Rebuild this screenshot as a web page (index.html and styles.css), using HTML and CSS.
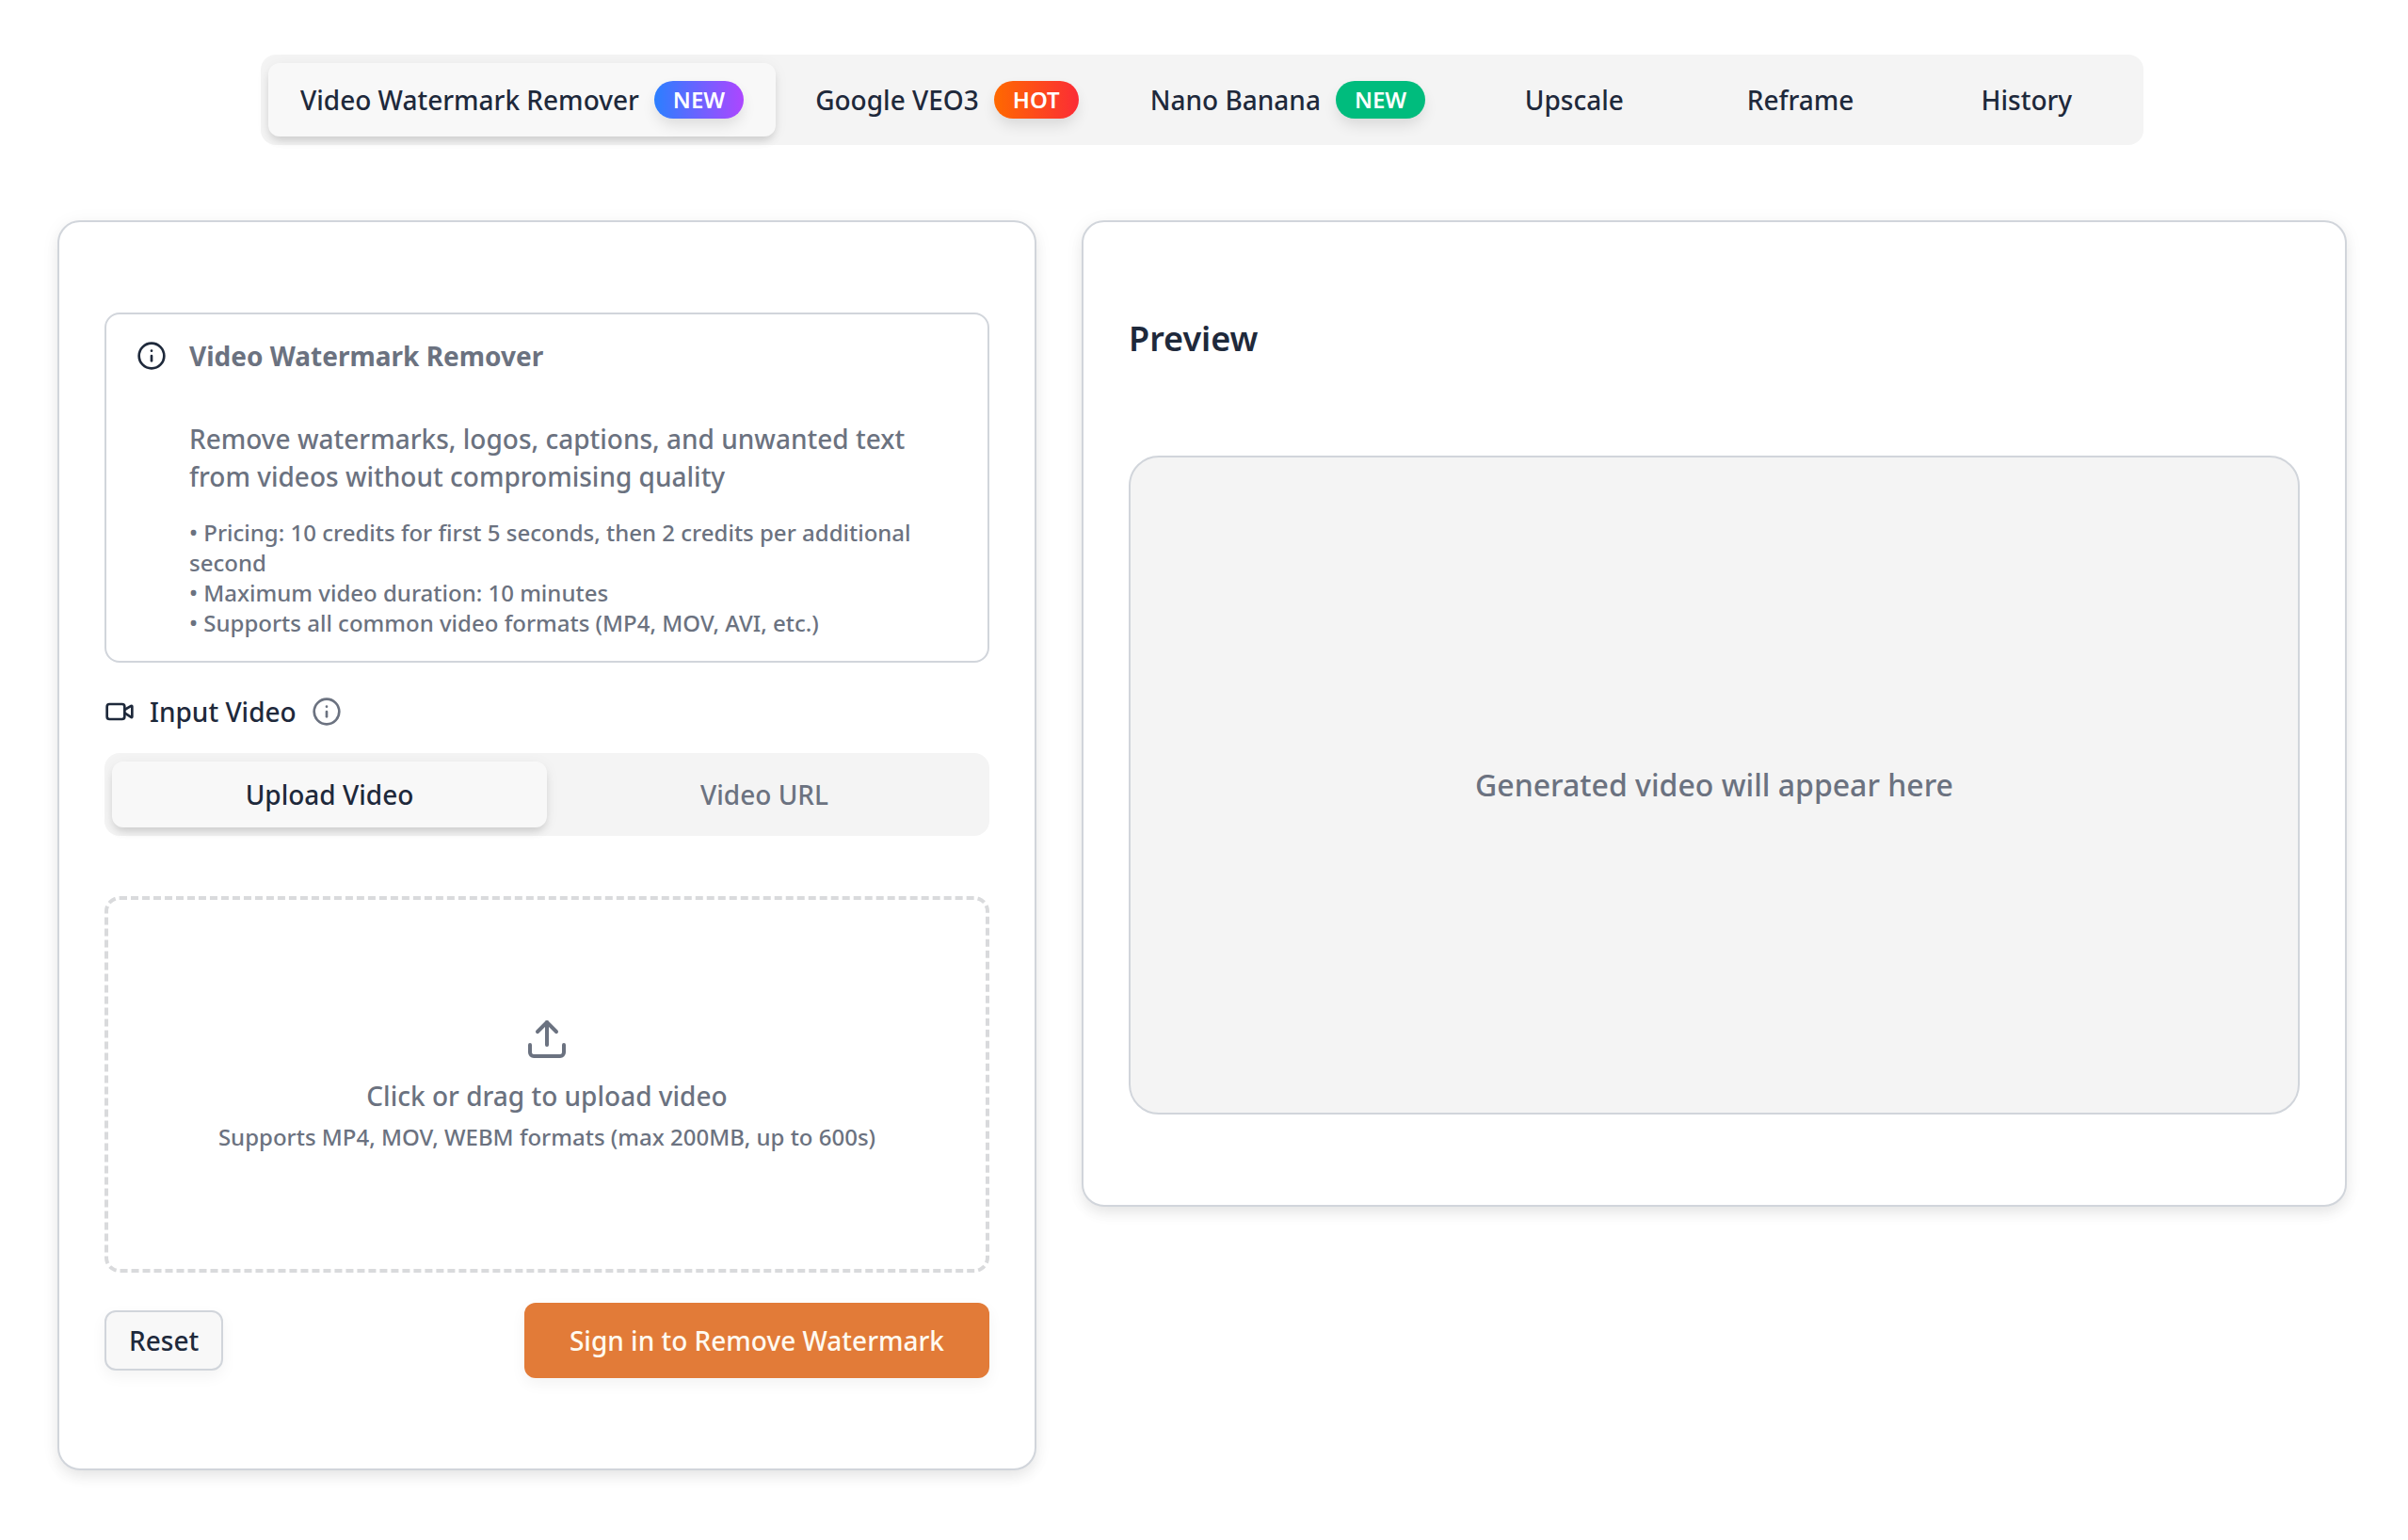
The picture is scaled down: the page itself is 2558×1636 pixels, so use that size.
FILE: index.html
```html
<!DOCTYPE html>
<html lang="en">
<head>
<meta charset="utf-8">
<meta name="viewport" content="width=device-width, initial-scale=1">
<title>Video Watermark Remover</title>
<link rel="stylesheet" href="styles.css">
</head>
<body>
<nav class="tools" aria-label="Tools">
  <button class="tool tool-active" type="button">Video Watermark Remover <span class="badge badge-violet">NEW</span></button>
  <button class="tool" type="button">Google VEO3 <span class="badge badge-hot">HOT</span></button>
  <button class="tool" type="button">Nano Banana <span class="badge badge-green">NEW</span></button>
  <button class="tool" type="button">Upscale</button>
  <button class="tool" type="button">Reframe</button>
  <button class="tool" type="button">History</button>
</nav>

<main class="workspace">
  <form class="card">
    <section class="notice">
      <svg class="icon notice-icon" viewBox="0 0 24 24" aria-hidden="true"><circle cx="12" cy="12" r="10"/><path d="M12 16v-4"/><path d="M12 8h.01"/></svg>
      <div>
        <h2 class="notice-title">Video Watermark Remover</h2>
        <p class="notice-text">Remove watermarks, logos, captions, and unwanted text from videos without compromising quality</p>
        <ul class="notice-list">
          <li>• Pricing: 10 credits for first 5 seconds, then 2 credits per additional second</li>
          <li>• Maximum video duration: 10 minutes</li>
          <li>• Supports all common video formats (MP4, MOV, AVI, etc.)</li>
        </ul>
      </div>
    </section>

    <div class="field-head">
      <svg class="icon" viewBox="0 0 24 24" aria-hidden="true"><path d="m16 13 5.223 3.482a.5.5 0 0 0 .777-.416V7.87a.5.5 0 0 0-.752-.432L16 10.5"/><rect x="2" y="6" width="14" height="12" rx="2"/></svg>
      <label for="video-file">Input Video</label>
      <svg class="icon icon-muted" viewBox="0 0 24 24" aria-hidden="true"><circle cx="12" cy="12" r="10"/><path d="M12 16v-4"/><path d="M12 8h.01"/></svg>
    </div>

    <div class="sources">
      <button class="source source-active" type="button">Upload Video</button>
      <button class="source" type="button">Video URL</button>
    </div>

    <label class="dropzone">
      <input class="file-input" id="video-file" type="file" accept="video/*">
      <svg class="icon icon-large" viewBox="0 0 24 24" aria-hidden="true"><path d="M12 3v12"/><path d="m17 8-5-5-5 5"/><path d="M21 15v4a2 2 0 0 1-2 2H5a2 2 0 0 1-2-2v-4"/></svg>
      <span class="dropzone-title">Click or drag to upload video</span>
      <span class="dropzone-hint">Supports MP4, MOV, WEBM formats (max 200MB, up to 600s)</span>
    </label>

    <div class="actions">
      <button class="btn btn-outline" type="reset">Reset</button>
      <button class="btn btn-primary" type="button">Sign in to Remove Watermark</button>
    </div>
  </form>

  <section class="card">
    <h2 class="preview-title">Preview</h2>
    <div class="preview">Generated video will appear here</div>
  </section>
</main>
</body>
</html>
```
FILE: styles.css
```css
:root {
  --ink: #1e293b;
  --muted: #6b7280;
  --line: #d1d5db;
  --surface: #f4f4f4;
  --raised: #f8f8f8;
  --shadow-card: 0 2px 20px rgba(0, 0, 0, 0.05), 0 8px 16px -2px rgba(0, 0, 0, 0.08);
  --shadow-tab: 0 2px 16px rgba(0, 0, 0, 0.05), 0 6px 10px -2px rgba(0, 0, 0, 0.14);
  --shadow-soft: 0 6px 16px rgba(0, 0, 0, 0.05);
}

* {
  box-sizing: border-box;
}

body {
  margin: 0;
  padding: 58px 65px 74px 61px;
  background: #fff;
  color: var(--ink);
  font: 500 28px/40px "Noto Sans", sans-serif;
}

h2,
p,
ul {
  margin: 0;
  padding: 0;
}

button {
  border: 0;
  padding: 0;
  background: none;
  color: inherit;
  font: inherit;
  white-space: nowrap;
  cursor: pointer;
}

.icon {
  width: 32px;
  height: 32px;
  flex: none;
  fill: none;
  stroke: currentColor;
  stroke-width: 2;
  stroke-linecap: round;
  stroke-linejoin: round;
}

.icon-muted {
  color: var(--muted);
}

.icon-large {
  width: 48px;
  height: 48px;
}

.tools {
  display: flex;
  gap: 8px;
  max-width: 2000px;
  margin: 0 auto 80px;
  padding: 9px 8px;
  border-radius: 16px;
  background: var(--surface);
}

.tool {
  display: flex;
  flex: 1;
  align-items: center;
  justify-content: center;
  gap: 16px;
  padding: 19px 34px;
  border-radius: 12px;
}

.tool-active,
.source-active {
  background: var(--raised);
  box-shadow: var(--shadow-tab);
}

.badge {
  padding: 4px 20px;
  border-radius: 20px;
  color: #fff;
  font-size: 24px;
  font-weight: 600;
  line-height: 32px;
  box-shadow: 0 8px 16px -2px rgba(0, 0, 0, 0.12);
}

.badge-violet {
  background: linear-gradient(90deg, #2b7fff, #ad46ff);
}

.badge-hot {
  background: linear-gradient(90deg, #ff6900, #fb2c36);
}

.badge-green {
  background: #00bc7d;
}

.workspace {
  display: grid;
  grid-template-columns: 65fr 84fr;
  align-items: start;
  gap: 48px;
}

.card {
  display: flex;
  flex-direction: column;
  padding: 96px 48px;
  border: 2px solid var(--line);
  border-radius: 24px;
  background: #fff;
  box-shadow: var(--shadow-card);
}

.notice {
  display: flex;
  gap: 24px;
  margin-bottom: 32px;
  padding: 24px 32px;
  border: 2px solid var(--line);
  border-radius: 16px;
}

.notice-icon {
  margin-top: 4px;
}

.notice-title {
  margin-bottom: 48px;
  color: var(--muted);
  font-size: 28px;
  font-weight: 700;
}

.notice-text {
  margin-bottom: 24px;
  color: var(--muted);
}

.notice-list {
  color: var(--muted);
  font-size: 24px;
  line-height: 32px;
  list-style: none;
}

.field-head {
  display: flex;
  align-items: center;
  gap: 16px;
  margin-bottom: 24px;
}

.sources {
  display: grid;
  grid-template-columns: 1fr 1fr;
  margin-bottom: 64px;
  padding: 9px 8px;
  border-radius: 16px;
  background: var(--surface);
}

.source {
  padding: 15px 24px;
  border-radius: 12px;
  color: var(--muted);
}

.source-active {
  color: var(--ink);
}

.dropzone {
  display: flex;
  flex-direction: column;
  align-items: center;
  justify-content: center;
  min-height: 400px;
  margin-bottom: 32px;
  border: 4px dashed #d9dadc;
  border-radius: 16px;
  color: var(--muted);
  cursor: pointer;
}

.file-input {
  position: absolute;
  width: 1px;
  height: 1px;
  opacity: 0;
}

.dropzone-title {
  margin: 16px 0 8px;
}

.dropzone-hint {
  font-size: 24px;
  line-height: 32px;
}

.actions {
  display: flex;
  align-items: center;
  justify-content: space-between;
}

.btn {
  border-radius: 12px;
  box-shadow: var(--shadow-soft);
}

.btn-outline {
  padding: 10px 24px;
  border: 2px solid var(--line);
  background: var(--raised);
}

.btn-primary {
  padding: 20px 48px;
  background: #e27b38;
  color: #fffaf0;
}

.preview-title {
  margin-bottom: 96px;
  font-size: 36px;
  font-weight: 600;
  line-height: 56px;
}

.preview {
  display: flex;
  align-items: center;
  justify-content: center;
  min-height: 700px;
  border: 2px solid var(--line);
  border-radius: 32px;
  background: var(--surface);
  color: var(--muted);
  font-size: 32px;
}
```
